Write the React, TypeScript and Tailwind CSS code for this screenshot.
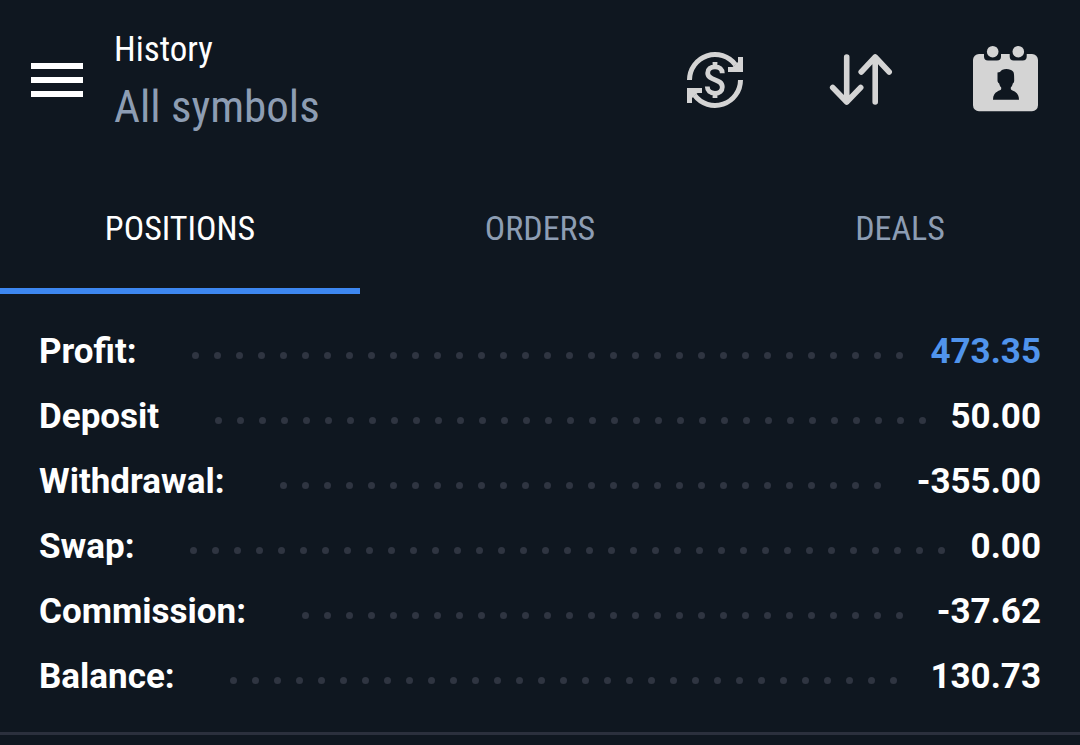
import { useState } from 'react';
import type { ReactNode } from 'react';

interface SummaryRow {
  label: string;
  value: string;
  highlight?: boolean;
}

const tabs = ['POSITIONS', 'ORDERS', 'DEALS'];

const summary: SummaryRow[] = [
  { label: 'Profit:', value: '473.35', highlight: true },
  { label: 'Deposit', value: '50.00' },
  { label: 'Withdrawal:', value: '-355.00' },
  { label: 'Swap:', value: '0.00' },
  { label: 'Commission:', value: '-37.62' },
  { label: 'Balance:', value: '130.73' },
];

const leaderDots = Array.from({ length: 100 }, (_, i) => i);

function CurrencyIcon() {
  return (
    <svg viewBox="0 0 72 72" className="size-[72px]" fill="none" aria-hidden="true">
      <g stroke="currentColor" strokeWidth="5">
        <path d="M10.5 36A25.5 25.5 0 0 1 56.4 20.7" />
        <path d="M61.5 36A25.5 25.5 0 0 1 15.6 51.3" />
      </g>
      <path d="M59 13h5v15H49v-5h4.5L59 18z" fill="currentColor" />
      <path d="M13 59H8V44h15v5h-4.5L13 54z" fill="currentColor" />
      <path
        d="M43.3 29.2C43.3 25.3 40.5 22.8 36 22.8c-4.3 0-7.3 2.3-7.3 6.1 0 8.3 14.6 5.2 14.6 14 0 4-3 6.4-7.3 6.4-4.7 0-7.7-2.7-7.7-6.8M36 18v5M36 49v5"
        stroke="currentColor"
        strokeWidth="4.8"
      />
    </svg>
  );
}

function SortIcon() {
  return (
    <svg
      viewBox="0 0 72 72"
      className="size-[72px]"
      fill="none"
      stroke="currentColor"
      strokeWidth="5.6"
      strokeLinecap="round"
      strokeLinejoin="round"
      aria-hidden="true"
    >
      <path d="M22.7 13v45M8.7 43.5l14 14.5 14-14.5" />
      <path d="M51.2 58V13M37.2 28l14-15 14 15" />
    </svg>
  );
}

function CalendarIcon() {
  return (
    <svg viewBox="0 0 72 72" className="size-[72px]" fill="currentColor" aria-hidden="true">
      <path
        fillRule="evenodd"
        d="M10 10h5v2.500a4 4 0 0 0 4 4h9a4 4 0 0 0 4-4V10h8.700v2.500a4 4 0 0 0 4 4h9a4 4 0 0 0 4-4V10H63a6 6 0 0 1 6 6v45.300a6 6 0 0 1-6 6H10a6 6 0 0 1-6-6V16a6 6 0 0 1 6-6z
          M28.500 28.500l2.500-.5c1-2 3.500-3 6.300-3 3.500 0 5 1.200 6.200 2 1.500 1 1.700 3 1.700 9.500 0 1.500-.6 2.600-1.400 3-.4 1.800-1 3-2 4v1.500c0 2 8.200 1.500 8.200 10.700H24c0-9.200 8.200-8.700 8.200-10.700v-1.500c-1-1-1.600-2.200-2-4-.8-.4-1.700-1.500-1.700-3z"
      />
      <circle cx="23.700" cy="7.700" r="5.800" />
      <circle cx="49.300" cy="7.700" r="5.800" />
    </svg>
  );
}

function IconButton({ label, children }: { label: string; children: ReactNode }) {
  return (
    <button type="button" aria-label={label} className="text-[#d4d4d4]">
      {children}
    </button>
  );
}

function Header() {
  return (
    <header className="flex items-center justify-between pl-[31px] pr-[39px] h-40">
      <div className="flex items-center gap-[31px]">
        <button type="button" aria-label="Menu" className="flex flex-col gap-2 w-[52px]">
          <span className="h-[6px] w-full bg-white" />
          <span className="h-[6px] w-full bg-white" />
          <span className="h-[6px] w-full bg-white" />
        </button>
        <div className="pt-1 font-['Roboto_Condensed','Roboto',sans-serif]">
          <h1 className="text-[35px] leading-[50px] text-white">History</h1>
          <p className="text-[45px] leading-[64px] text-[#8d9db3]">All symbols</p>
        </div>
      </div>

      {/* Actions */}
      <div className="flex items-center gap-[73px]">
        <IconButton label="Currency">
          <CurrencyIcon />
        </IconButton>
        <IconButton label="Sort">
          <SortIcon />
        </IconButton>
        <IconButton label="Period">
          <CalendarIcon />
        </IconButton>
      </div>
    </header>
  );
}

function Tabs() {
  const [active, setActive] = useState('POSITIONS');

  return (
    <nav className="grid grid-cols-3 font-['Roboto_Condensed','Roboto',sans-serif] text-[34px] leading-[40px]">
      {tabs.map((tab) => (
        <button
          key={tab}
          type="button"
          onClick={() => setActive(tab)}
          className={
            tab === active
              ? 'pt-12 pb-10 border-b-[6px] border-[#3d87f0] text-white'
              : 'pt-12 pb-10 border-b-[6px] border-transparent text-[#8d9db3]'
          }
        >
          {tab}
        </button>
      ))}
    </nav>
  );
}

function Summary() {
  return (
    <dl className="px-[39px] pt-[25px] pb-[23px] border-b-[3px] border-[#2b303d] text-[35px] leading-[65px] font-bold">
      {summary.map((row) => (
        <div key={row.label} className="flex items-center">
          <dt>{row.label}</dt>
          {/* Only whole dots fit on the first line, the rest wraps out of view */}
          <div className="flex flex-1 flex-wrap ml-12 mr-4 mt-2 h-[7px] overflow-hidden" aria-hidden="true">
            {leaderDots.map((dot) => (
              <span key={dot} className="flex justify-center w-[22px] h-[7px]">
                <span className="size-[7px] rounded-full bg-[#2f3541]" />
              </span>
            ))}
          </div>
          <dd className={row.highlight ? 'text-[#5094ec]' : 'text-white'}>{row.value}</dd>
        </div>
      ))}
    </dl>
  );
}

export default function App() {
  return (
    <main className="min-h-screen bg-[#0f1720] text-white font-['Roboto',sans-serif]">
      <Header />
      <Tabs />
      <Summary />
    </main>
  );
}
